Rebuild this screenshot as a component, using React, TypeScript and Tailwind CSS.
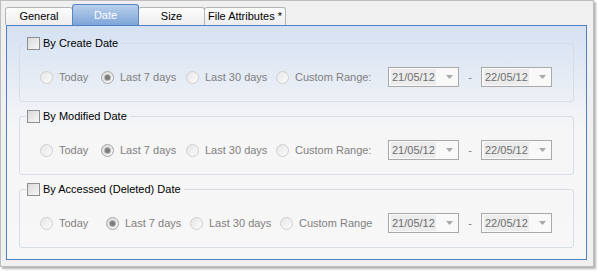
import React from 'react';

type Option = { label: string; width: number; checked?: boolean };

interface DateGroupProps {
  title: string;
  options: Option[];
}

const Checkbox: React.FC = () => (
  <span className="block w-[13px] h-[13px] border border-[#8e8f8f] bg-[linear-gradient(135deg,#d9d9d9,#f7f7f7)] shrink-0" />
);

const Radio: React.FC<{ checked?: boolean }> = ({ checked }) => (
  <span
    className={`flex items-center justify-center w-[13px] h-[13px] rounded-full border shrink-0 ${
      checked
        ? 'border-[#a3a3a3] bg-[linear-gradient(135deg,#dcdcdc,#fbfbfb)]'
        : 'border-[#cfcfcf] bg-[linear-gradient(135deg,#e6e6e6,#fbfbfb)]'
    }`}
  >
    {checked && <span className="block w-[5px] h-[5px] rounded-full bg-[#7c7c7c] shadow-[0_0_0_1px_#b5b5b5]" />}
  </span>
);

const DateBox: React.FC<{ value: string }> = ({ value }) => (
  <div className="flex items-center w-[71px] h-[20px] border border-[#a9a9a9] bg-[#f9f9f9]">
    <span className="ml-[2px] h-[16px] px-[1px] flex items-center bg-[#ececec] text-[#6e6e6e]">{value}</span>
    <svg width="7" height="4" viewBox="0 0 7 4" className="ml-[10px]">
      <path d="M0 0h7L3.5 4z" fill="#a8a8a8" />
    </svg>
  </div>
);

const DateGroup: React.FC<DateGroupProps> = ({ title, options }) => (
  <fieldset className="border border-[#d7dde5] rounded-[3px]">
    <legend className="ml-[6px] px-[1px] pr-[3px] h-[13px] flex items-center gap-[3px] text-black leading-[13px]">
      <Checkbox />
      <span>{title}</span>
    </legend>
    <div className="flex items-center h-[20px] mt-[17px] mb-[14px] pl-[20px]">
      {options.map(o => (
        <div key={o.label} className="flex items-center gap-[6px] shrink-0" style={{ width: o.width }}>
          <Radio checked={o.checked} />
          <span className="text-[#7f7f7f] whitespace-nowrap">{o.label}</span>
        </div>
      ))}
      <DateBox value="21/05/12" />
      <span className="w-[22px] text-center text-[#7f7f7f]">-</span>
      <DateBox value="22/05/12" />
    </div>
  </fieldset>
);

const standard: Option[] = [
  { label: 'Today', width: 61 },
  { label: 'Last 7 days', width: 85, checked: true },
  { label: 'Last 30 days', width: 90 },
  { label: 'Custom Range:', width: 112 },
];

const accessed: Option[] = [
  { label: 'Today', width: 66 },
  { label: 'Last 7 days', width: 84, checked: true },
  { label: 'Last 30 days', width: 90 },
  { label: 'Custom Range', width: 108 },
];

const tabs = ['General', 'Date', 'Size', 'File Attributes *'];

export default function App() {
  return (
    <div className="w-[598px] h-[271px] bg-white font-['Liberation_Sans',Arial,sans-serif] text-[11px]">
      <div className="w-[594px] border border-[#bdbdbd] bg-[#f0f0f0] pb-[6px] shadow-[2px_2px_2px_rgba(0,0,0,0.3)]">
        <div className="flex items-end pt-[3px] pl-[4px] h-[24px]">
          {tabs.map((t, i) => {
            const active = t === 'Date';
            return (
              <div
                key={t}
                className={`flex items-center justify-center border border-b-0 rounded-t-[3px] ${i > 0 ? '-ml-px' : ''} ${
                  active
                    ? 'h-[21px] relative border-[#5a86c4] bg-[linear-gradient(to_bottom,#b9cfeb,#7ea5da)] text-white'
                    : 'h-[18px] border-[#b5b5b5] bg-[linear-gradient(to_bottom,#fdfdfd,#ededed)] text-black'
                } ${t === 'File Attributes *' ? 'w-[82px]' : i === 0 ? 'w-[68px]' : 'w-[67px]'}`}
              >
                {t}
              </div>
            );
          })}
        </div>
        <div className="ml-[5px] w-[581px] h-[235px] border border-[#4f7fc4] bg-[linear-gradient(to_bottom,#d5e1f2,#eef1f6_34%,#f6f6f6_45%,#f7f7f7)] px-[12px] pt-[11px] flex flex-col gap-[8px]">
          <DateGroup title="By Create Date" options={standard} />
          <DateGroup title="By Modified Date" options={standard} />
          <DateGroup title="By Accessed (Deleted) Date" options={accessed} />
        </div>
      </div>
    </div>
  );
}
